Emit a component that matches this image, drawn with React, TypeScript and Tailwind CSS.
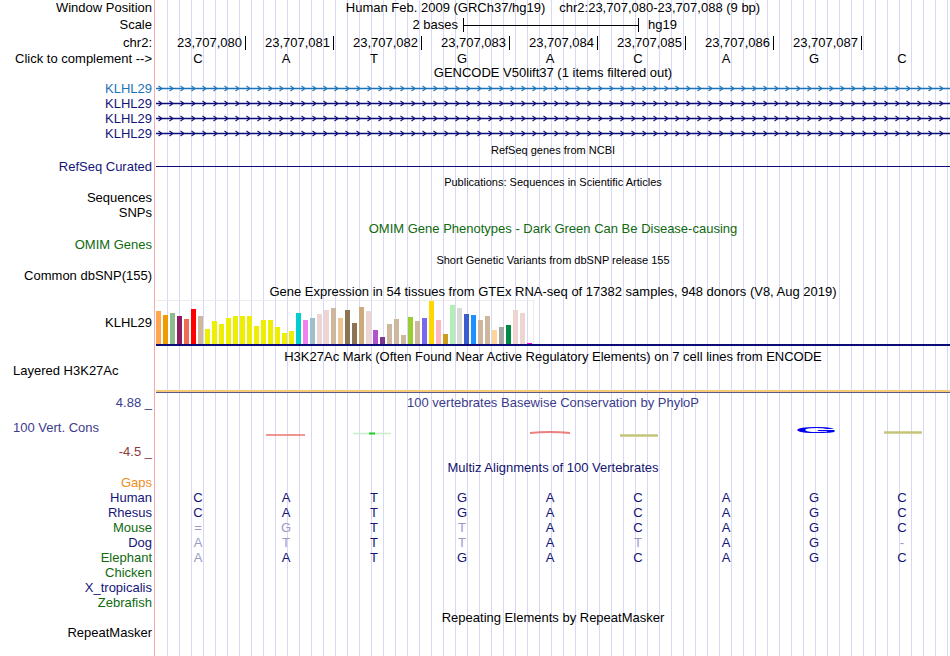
import type { ReactNode } from "react";
import clsx from "clsx";

const GUIDE = "bg-[repeating-linear-gradient(90deg,transparent_0_11px,#d8d8f6_11px_12px)]";
const NAVY = "text-[#141478]";
const FADED = "text-[#9a9ac4]";
const GREEN = "text-[#0f6a0f]";

type RowProps = {
  h: string;
  label?: ReactNode;
  tone?: string;
  left?: boolean;
  children?: ReactNode;
};

function Row({ h, label, tone = "text-black", left = false, children }: RowProps) {
  return (
    <div className={clsx("flex", h)}>
      <div
        className={clsx(
          "w-[155px] shrink-0 border-r border-[#f5aaaa] flex items-center whitespace-nowrap",
          left ? "justify-start pl-[13px]" : "justify-end pr-[2px]",
          tone
        )}
      >
        {label}
      </div>
      <div className={clsx("ml-[1px] flex-1 min-w-0 relative flex items-center", GUIDE)}>{children}</div>
    </div>
  );
}

function Title({ children, className }: { children: ReactNode; className?: string }) {
  return <div className={clsx("w-full text-center whitespace-nowrap", className)}>{children}</div>;
}

type Base = [string, boolean];

function Bases({ bases, tone = "text-black" }: { bases: Base[]; tone?: string }) {
  return (
    <div className="flex -ml-[2px]">
      {bases.map(([b, dim], i) => (
        <div key={i} className={clsx("w-[88px] text-center", dim ? FADED : tone)}>
          {b}
        </div>
      ))}
    </div>
  );
}

const seq = (s: string): Base[] => s.split("").map((c) => [c, false]);
const mix = (s: string, dim: string): Base[] => s.split("").map((c, i) => [c, dim[i] === "1"]);

function GeneLine({ color, id }: { color: string; id: string }) {
  return (
    <svg width="100%" height="15" className="block">
      <defs>
        <pattern id={id} width="11" height="15" patternUnits="userSpaceOnUse">
          <path d="M2.5 5 L6 7.5 L2.5 10" stroke={color} strokeWidth="1.1" fill="none" />
        </pattern>
      </defs>
      <line x1="0" y1="7.5" x2="100%" y2="7.5" stroke={color} strokeWidth="1.3" />
      <rect x="0" y="0" width="100%" height="15" fill={`url(#${id})`} />
    </svg>
  );
}

const GTEX: [number, string][] = [
  [33, "#FFA54F"], [29, "#EE9A00"], [31, "#8FBC8F"], [28, "#8B1C62"], [25, "#EE6A50"], [35, "#FF0000"],
  [28, "#CDB79E"], [15, "#EEEE00"], [23, "#EEEE00"], [20, "#EEEE00"], [26, "#EEEE00"], [28, "#EEEE00"],
  [28, "#EEEE00"], [28, "#EEEE00"], [18, "#EEEE00"], [24, "#EEEE00"], [24, "#EEEE00"], [17, "#EEEE00"],
  [11, "#EEEE00"], [13, "#EEEE00"], [31, "#00CDCD"], [24, "#EE82EE"], [26, "#9AC0CD"], [30, "#EED5D2"],
  [34, "#EED5D2"], [36, "#CDB79E"], [26, "#EEC591"], [34, "#8B7355"], [21, "#8B7355"], [37, "#CDAA7D"],
  [33, "#EED5D2"], [14, "#B452CD"], [7, "#7A378B"], [20, "#CDB79E"], [25, "#CDB79E"], [9, "#CDB79E"],
  [27, "#9ACD32"], [23, "#CDB79E"], [26, "#7A67EE"], [43, "#FFD700"], [24, "#FFB6C1"], [10, "#CD9B1D"],
  [39, "#B4EEB4"], [36, "#D9D9D9"], [30, "#3A5FCD"], [29, "#1E90FF"], [24, "#CDB79E"], [28, "#CDB79E"],
  [14, "#FFD39B"], [17, "#A6A6A6"], [19, "#008B45"], [34, "#EED5D2"], [31, "#EED5D2"], [1, "#FF00FF"],
];

const POSITIONS = ["080", "081", "082", "083", "084", "085", "086", "087"];

export default function App() {
  return (
    <div className="w-[950px] h-[656px] overflow-hidden bg-white text-[13px] text-black font-['Liberation_Sans',Arial,sans-serif]">
      <Row h="h-[16px]" label="Window Position">
        <div className="w-full flex justify-center gap-[14px] whitespace-nowrap">
          <span>Human Feb. 2009 (GRCh37/hg19)</span>
          <span>chr2:23,707,080-23,707,088 (9 bp)</span>
        </div>
      </Row>
      <Row h="h-[18px]" label="Scale">
        <div className="w-full flex items-center">
          <div className="flex-1 text-right pr-[5px]">2 bases</div>
          <div className="w-[176px] h-[14px] border-x border-black flex items-center">
            <div className="w-full h-px bg-black" />
          </div>
          <div className="flex-1 pl-[9px]">hg19</div>
        </div>
      </Row>
      <Row h="h-[18px]" label="chr2:">
        <div className="flex ml-[2px]">
          {POSITIONS.map((p) => (
            <div key={p} className="w-[88px] flex items-center justify-end">
              <span>23,707,{p}</span>
              <span className="ml-[3px] w-px h-[14px] bg-black" />
            </div>
          ))}
        </div>
      </Row>
      <Row h="h-[13px]" label="Click to complement -->">
        <Bases bases={seq("CATGACAGC")} />
      </Row>
      <Row h="h-[16px]">
        <Title>GENCODE V50lift37 (1 items filtered out)</Title>
      </Row>
      <Row h="h-[15px]" label="KLHL29" tone="text-[#1a72b8]">
        <GeneLine color="#1a72b8" id="g1" />
      </Row>
      <Row h="h-[15px]" label="KLHL29" tone={NAVY}>
        <GeneLine color="#0c0c78" id="g2" />
      </Row>
      <Row h="h-[15px]" label="KLHL29" tone={NAVY}>
        <GeneLine color="#0c0c78" id="g3" />
      </Row>
      <Row h="h-[15px]" label="KLHL29" tone={NAVY}>
        <GeneLine color="#0c0c78" id="g4" />
      </Row>
      <Row h="h-[18px]">
        <Title className="text-[11px]">RefSeq genes from NCBI</Title>
      </Row>
      <Row h="h-[15px]" label="RefSeq Curated" tone={NAVY}>
        <div className="w-full h-px bg-[#0c0c78]" />
      </Row>
      <Row h="h-[17px]">
        <Title className="text-[11px]">Publications: Sequences in Scientific Articles</Title>
      </Row>
      <Row h="h-[14px]" label="Sequences" />
      <Row h="h-[15px]" label="SNPs" />
      <Row h="h-[18px]">
        <Title className={GREEN}>OMIM Gene Phenotypes - Dark Green Can Be Disease-causing</Title>
      </Row>
      <Row h="h-[13px]" label="OMIM Genes" tone={GREEN} />
      <Row h="h-[18px]">
        <Title className="text-[11px]">Short Genetic Variants from dbSNP release 155</Title>
      </Row>
      <Row h="h-[14px]" label="Common dbSNP(155)" />
      <Row h="h-[17px]">
        <Title>Gene Expression in 54 tissues from GTEx RNA-seq of 17382 samples, 948 donors (V8, Aug 2019)</Title>
      </Row>
      <Row h="h-[46px]" label="KLHL29">
        <div className="w-full h-full flex flex-col">
          <div className="h-[44px] w-[378px] border-t border-r border-[#ececec] flex items-end gap-[2px]">
            {GTEX.map(([v, c], i) => (
              <div key={i} className="w-[5px] shrink-0" style={{ height: v, backgroundColor: c }} />
            ))}
          </div>
          <div className="h-[2px] bg-[#0c0c78]" />
        </div>
      </Row>
      <Row h="h-[21px]">
        <Title>H3K27Ac Mark (Often Found Near Active Regulatory Elements) on 7 cell lines from ENCODE</Title>
      </Row>
      <Row h="h-[7px]" label="Layered H3K27Ac" left />
      <Row h="h-[16px]" />
      <Row h="h-[3px]">
        <div className="w-full h-full flex flex-col">
          <div className="h-[2px] bg-[#f7c878]" />
          <div className="h-px bg-[#5a5a8c]" />
        </div>
      </Row>
      <Row h="h-[20px]" label="4.88 _" tone="text-[#3c3c8c]">
        <Title className="text-[#3c3c8c]">100 vertebrates Basewise Conservation by PhyloP</Title>
      </Row>
      <Row h="h-[30px]" label="100 Vert. Cons" tone="text-[#3c3c8c]" left>
        <svg width="100%" height="30" className="block">
          <line x1="110" y1="22" x2="149" y2="22" stroke="#ee7a7a" strokeWidth="2" opacity="0.8" />
          <line x1="197" y1="20.5" x2="235" y2="20.5" stroke="#c8f0c8" strokeWidth="1.5" />
          <line x1="213" y1="20.5" x2="219" y2="20.5" stroke="#22cc22" strokeWidth="2" />
          <path d="M374 20 Q394 18 414 20" stroke="#e86a6a" strokeWidth="2" fill="none" opacity="0.85" />
          <line x1="464" y1="22.5" x2="502" y2="22.5" stroke="#c4c47a" strokeWidth="2.5" />
          <line x1="728" y1="19.5" x2="766" y2="19.5" stroke="#c4c47a" strokeWidth="2.5" />
        </svg>
        <div className="absolute left-[639px] top-[13px] w-[43px] h-[8px] flex items-center justify-center">
          <span className="inline-block font-bold text-[11px] leading-none text-[#0000ee] scale-x-[5] scale-y-[0.85]">G</span>
        </div>
      </Row>
      <Row h="h-[17px]" label="-4.5 _" tone="text-[#8c3c3c]" />
      <Row h="h-[15px]">
        <Title className="text-[#14146e] pt-[1px]">Multiz Alignments of 100 Vertebrates</Title>
      </Row>
      <Row h="h-[15px]" label="Gaps" tone="text-[#ee8c1c]" />
      <Row h="h-[15px]" label="Human" tone={NAVY}>
        <Bases bases={seq("CATGACAGC")} tone={NAVY} />
      </Row>
      <Row h="h-[15px]" label="Rhesus" tone={NAVY}>
        <Bases bases={seq("CATGACAGC")} tone={NAVY} />
      </Row>
      <Row h="h-[15px]" label="Mouse" tone={GREEN}>
        <Bases bases={mix("=GTTACAGC", "110100000")} tone={NAVY} />
      </Row>
      <Row h="h-[15px]" label="Dog" tone={NAVY}>
        <Bases bases={mix("ATTTATAG-", "110101001")} tone={NAVY} />
      </Row>
      <Row h="h-[15px]" label="Elephant" tone={GREEN}>
        <Bases bases={mix("AATGACAGC", "100000000")} tone={NAVY} />
      </Row>
      <Row h="h-[15px]" label="Chicken" tone={GREEN} />
      <Row h="h-[15px]" label="X_tropicalis" tone={NAVY} />
      <Row h="h-[15px]" label="Zebrafish" tone={GREEN} />
      <Row h="h-[16px]">
        <Title>Repeating Elements by RepeatMasker</Title>
      </Row>
      <Row h="h-[13px]" label="RepeatMasker" />
      <Row h="h-[17px]" />
    </div>
  );
}
